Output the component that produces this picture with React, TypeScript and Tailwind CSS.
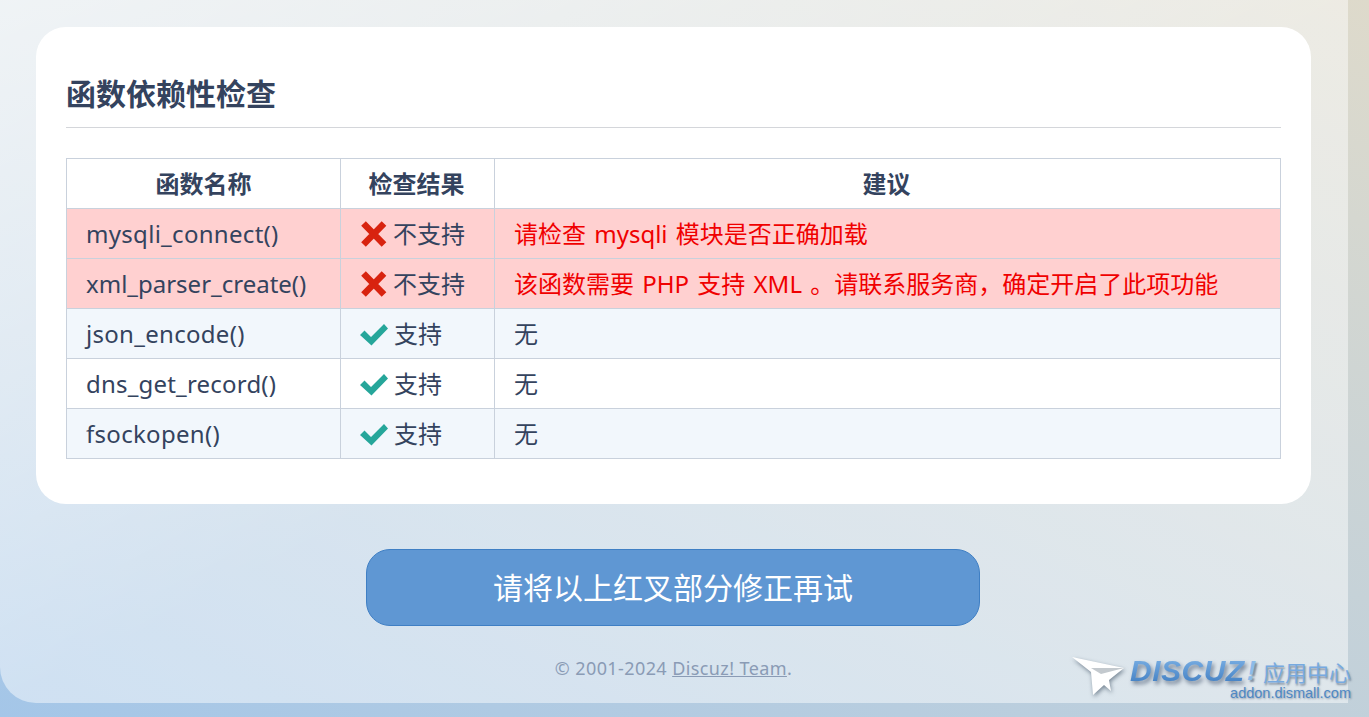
const rows = [
  { name: "mysqli_connect()", ok: false, tip: "请检查 mysqli 模块是否正确加载", bg: "bg-[#ffd0d0]", track: "tracking-[0.3px]" },
  { name: "xml_parser_create()", ok: false, tip: "该函数需要 PHP 支持 XML 。请联系服务商，确定开启了此项功能", bg: "bg-[#ffd0d0]", track: "" },
  { name: "json_encode()", ok: true, tip: "无", bg: "bg-[#f2f7fc]", track: "tracking-[0.3px]" },
  { name: "dns_get_record()", ok: true, tip: "无", bg: "bg-white", track: "tracking-[0.2px]" },
  { name: "fsockopen()", ok: true, tip: "无", bg: "bg-[#f2f7fc]", track: "tracking-[0.3px]" },
];

function CrossIcon() {
  return (
    <svg width="28" height="26" viewBox="0 0 28 26" className="shrink-0">
      <path d="M3.5 2.5 L24 23.5 M24 2.5 L3.5 23.5" stroke="#d8230f" strokeWidth="6.5" fill="none" />
    </svg>
  );
}

function CheckIcon() {
  return (
    <svg width="28" height="24" viewBox="0 0 28 24" className="shrink-0">
      <polygon points="0,13 4.5,8.5 11,15 24,2 28,6.5 11.5,23.5" fill="#26a69a" />
    </svg>
  );
}

function Logo() {
  return (
    <div className="absolute right-[18px] bottom-[18px] flex items-start">
      <svg width="54" height="40" viewBox="0 0 54 40" className="drop-shadow-[1px_2px_2px_rgba(40,60,80,0.55)]">
        <polygon points="0,0 52,11 37,23 39,34 32,28 21,38 19,15" fill="#ffffff" />
        <polygon points="19,11 52,11 29,17" fill="#c3c9ce" />
      </svg>
      <div className="ml-[4px] flex flex-col items-end">
        <div className="flex h-[28px] items-center">
          <span className="bg-gradient-to-b from-[#7db2e6] to-[#3e7cc0] bg-clip-text font-['Liberation_Sans',sans-serif] text-[30px] leading-none font-bold tracking-[0.5px] text-transparent italic drop-shadow-[2px_3px_2px_rgba(30,50,80,0.55)]">
            DISCUZ
          </span>
          <span className="ml-[2px] font-['Liberation_Sans',sans-serif] text-[28px] leading-none font-bold text-[#8cbbe8] italic [text-shadow:2px_2px_2px_rgba(30,50,80,0.5)]">
            !
          </span>
          <span className="ml-[7px] font-['Noto_Sans_CJK_SC',sans-serif] text-[22px] leading-none text-[#77aae0] [text-shadow:1px_2px_2px_rgba(30,50,80,0.5)]">
            应用中心
          </span>
        </div>
        <div className="mt-[2px] font-['Liberation_Sans',sans-serif] text-[14.5px] leading-[12px] text-[#4f88c4] [text-shadow:1px_1px_2px_rgba(30,50,80,0.4)]">
          addon.dismall.com
        </div>
      </div>
    </div>
  );
}

export default function App() {
  return (
    <div className="relative h-[717px] w-full overflow-hidden bg-gradient-to-tr from-[#a4c6e8] to-[#dedacb] font-['Noto_Sans','Noto_Sans_CJK_SC',sans-serif]">
      <div className="h-[703px] w-[1348px] rounded-bl-[36px] bg-gradient-to-br from-white/75 via-white/47 to-white/47 pt-[27px] pr-[37px] pl-[36px]">
        <div className="h-[477px] rounded-[30px] bg-white px-[30px] pt-[44px]">
          <h1 className="h-[57px] border-b border-[#d4d6da] text-[30px] leading-[46px] font-bold text-[#34435e]">
            函数依赖性检查
          </h1>
          <table className="mt-[30px] w-[1215px] table-fixed border-collapse text-[24px] text-[#34435e]">
            <thead>
              <tr className="h-[50px] bg-white">
                <th className="w-[274px] border border-[#c9d1dc]">函数名称</th>
                <th className="w-[154px] border border-[#c9d1dc] pr-[2px]">检查结果</th>
                <th className="border border-[#c9d1dc] pr-[2px]">建议</th>
              </tr>
            </thead>
            <tbody>
              {rows.map((r) => (
                <tr key={r.name} className={`h-[50px] ${r.bg}`}>
                  <td className={`border border-[#c9d1dc] pl-[19px] ${r.track}`}>{r.name}</td>
                  <td className="border border-[#c9d1dc] pl-[19px]">
                    <span className={`flex items-center ${r.ok ? "gap-[6px]" : "gap-[5px]"}`}>
                      {r.ok ? <CheckIcon /> : <CrossIcon />}
                      {r.ok ? "支持" : "不支持"}
                    </span>
                  </td>
                  <td className={`border border-[#c9d1dc] pl-[19px] [word-spacing:2px] ${r.ok ? "" : "text-[#f00000]"}`}>{r.tip}</td>
                </tr>
              ))}
            </tbody>
          </table>
        </div>
        <div className="mt-[45px] mr-[1px] flex justify-center">
          <button className="h-[77px] w-[614px] rounded-[24px] border border-[#3f7fc4] bg-[#5f97d3] text-[30px] text-white">
            请将以上红叉部分修正再试
          </button>
        </div>
        <p className="mt-[29px] text-center text-[18px] leading-[26px] tracking-[0.4px] text-[#8a9bb5]">
          © 2001-2024 <a className="underline">Discuz! Team</a>.
        </p>
      </div>
      <Logo />
    </div>
  );
}
